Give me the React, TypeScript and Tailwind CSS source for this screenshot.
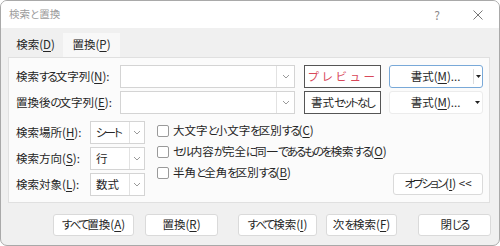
import React from "react";

const U = ({ c }: { c: string }) => <span className="underline underline-offset-[2px] decoration-[1px]">{c}</span>;

const K = ({ t }: { t: string }) => (
  <>
    {t.split(/([\u3040-\u30ff]+)/).map((p, i) =>
      /[\u3040-\u30ff]/.test(p) ? (
        <span key={i} className="tracking-[-2px]">
          {p}
        </span>
      ) : (
        <React.Fragment key={i}>{p}</React.Fragment>
      )
    )}
  </>
);

const Chevron = () => (
  <svg width="8" height="5" viewBox="0 0 8 5" fill="none">
    <path d="M1 1 L4 4 L7 1" stroke="#9a9a9a" strokeWidth="1" />
  </svg>
);

const Tri = () => (
  <svg width="5" height="3" viewBox="0 0 5 3">
    <polygon points="0,0 5,0 2.5,3" fill="#222" />
  </svg>
);

function ComboInput() {
  return (
    <div className="w-[175px] h-[23px] bg-white border border-[#d4d4d4] flex">
      <div className="flex-1" />
      <div className="w-[18px] border-l border-[#e2e2e2] flex items-center justify-center">
        <Chevron />
      </div>
    </div>
  );
}

function Select({ v }: { v: string }) {
  return (
    <div className="w-[55px] h-[23px] bg-white border border-[#d4d4d4] flex items-center">
      <div className="flex-1 pl-[5px] leading-none">
        <K t={v} />
      </div>
      <div className="w-[15px] h-full border-l border-[#e2e2e2] flex items-center justify-center">
        <Chevron />
      </div>
    </div>
  );
}

function FormatBtn({ focus }: { focus?: boolean }) {
  return (
    <div
      className={`w-[94px] h-[23px] bg-white rounded-[3px] flex items-center ${
        focus ? "border border-[#79a9d8]" : "border border-[#ececec]"
      }`}
    >
      <div className="flex-1 text-center leading-none pl-[8px]">
        書式(<U c="M" />)...
      </div>
      <div className={`w-[9px] h-[15px] flex items-center justify-center ${focus ? "border-l border-[#dcdcdc]" : ""}`}>
        <Tri />
      </div>
    </div>
  );
}

function Check({ children }: { children: React.ReactNode }) {
  return (
    <div className="h-[21px] flex items-center">
      <div className="w-[12px] h-[12px] border border-[#9a9a9a] rounded-[2px] bg-white shrink-0" />
      <div className="ml-[4px] leading-none">{children}</div>
    </div>
  );
}

function Btn({ w, ml, children }: { w: string; ml: string; children: React.ReactNode }) {
  return (
    <div
      className={`${w} ${ml} h-[22px] bg-white border border-[#dadada] rounded-[3px] flex items-center justify-center leading-none`}
    >
      {children}
    </div>
  );
}

export default function App() {
  return (
    <div className="w-[500px] h-[246px] bg-white font-['Noto_Sans_CJK_JP','Noto_Sans',sans-serif] [font-feature-settings:'palt'] text-[11.5px] whitespace-nowrap text-[#262626]">
      <div className="w-full h-full border border-[#a9a9a9] rounded-[7px] overflow-hidden flex flex-col bg-[#f0f0f0]">
        {/* title bar */}
        <div className="h-[27px] bg-white flex items-center shrink-0">
          <div className="ml-[8px] text-[10.5px] text-[#9c9c9c] leading-none">検索と置換</div>
          <div className="flex-1" />
          <div className="text-[12px] text-[#8a8a8a] leading-none mr-[33px]">?</div>
          <svg width="10" height="10" viewBox="0 0 10 10" className="mr-[16px]">
            <path d="M0.5 0.5 L9.5 9.5 M9.5 0.5 L0.5 9.5" stroke="#777" strokeWidth="1" />
          </svg>
        </div>

        {/* tabs */}
        <div className="mt-[5px] ml-[7px] h-[24px] flex shrink-0">
          <div className="w-[55px] flex items-center justify-center leading-none">
            検索(<U c="D" />)
          </div>
          <div className="w-[57px] bg-[#f8f8f8] flex items-center justify-center leading-none">
            置換(<U c="P" />)
          </div>
        </div>

        {/* panel */}
        <div className="ml-[7px] w-[482px] h-[146px] bg-[#fbfbfb] border border-[#e0e0e0] pl-[7px] pt-[7px] shrink-0">
          <div className="flex items-center h-[23px]">
            <div className="w-[104px] leading-none">
              <K t="検索する文字列" />(<U c="N" />):
            </div>
            <ComboInput />
            <div className="ml-[9px] w-[77px] h-[23px] border border-[#555] bg-white flex items-center justify-center leading-none text-[#d8485a] tracking-[2.5px] [font-feature-settings:normal]">
              プレビュー
            </div>
            <div className="ml-[8px]">
              <FormatBtn focus />
            </div>
          </div>
          <div className="flex items-center h-[23px] mt-[3px]">
            <div className="w-[104px] leading-none">
              <K t="置換後の文字列" />(<U c="E" />):
            </div>
            <ComboInput />
            <div className="ml-[9px] w-[77px] h-[23px] border border-[#555] bg-white flex items-center justify-center leading-none">
              <K t="書式セットなし" />
            </div>
            <div className="ml-[8px]">
              <FormatBtn />
            </div>
          </div>

          <div className="flex mt-[7px]">
            <div className="flex flex-col gap-[3px]">
              <div className="flex items-center">
                <div className="w-[74px] leading-none">
                  検索場所(<U c="H" />):
                </div>
                <Select v="シート" />
              </div>
              <div className="flex items-center">
                <div className="w-[74px] leading-none">
                  検索方向(<U c="S" />):
                </div>
                <Select v="行" />
              </div>
              <div className="flex items-center">
                <div className="w-[74px] leading-none">
                  検索対象(<U c="L" />):
                </div>
                <Select v="数式" />
              </div>
            </div>
            <div className="ml-[12px] -mt-[1px] flex flex-col">
              <Check>
                <K t="大文字と小文字を区別する" />(<U c="C" />)
              </Check>
              <Check>
                <K t="セル内容が完全に同一であるものを検索する" />(<U c="O" />)
              </Check>
              <Check>
                <K t="半角と全角を区別する" />(<U c="B" />)
              </Check>
            </div>
            <div className="flex-1" />
            <div className="self-end mr-[6px] mb-[1px]">
              <div className="w-[90px] h-[22px] bg-white border border-[#dadada] rounded-[3px] flex items-center justify-center leading-none">
                <K t="オプション" />(<U c="I" />)&nbsp;&lt;&lt;
              </div>
            </div>
          </div>
        </div>

        {/* bottom buttons */}
        <div className="flex mt-[11px] pl-[52px]">
          <Btn w="w-[81px]" ml="ml-0">
            <K t="すべて置換" />(<U c="A" />)
          </Btn>
          <Btn w="w-[73px]" ml="ml-[11px]">
            置換(<U c="R" />)
          </Btn>
          <Btn w="w-[79px]" ml="ml-[20px]">
            <K t="すべて検索" />(<U c="I" />)
          </Btn>
          <Btn w="w-[71px]" ml="ml-[9px]">
            <K t="次を検索" />(<U c="F" />)
          </Btn>
          <Btn w="w-[73px]" ml="ml-[21px]">
            <K t="閉じる" />
          </Btn>
        </div>
      </div>
    </div>
  );
}
